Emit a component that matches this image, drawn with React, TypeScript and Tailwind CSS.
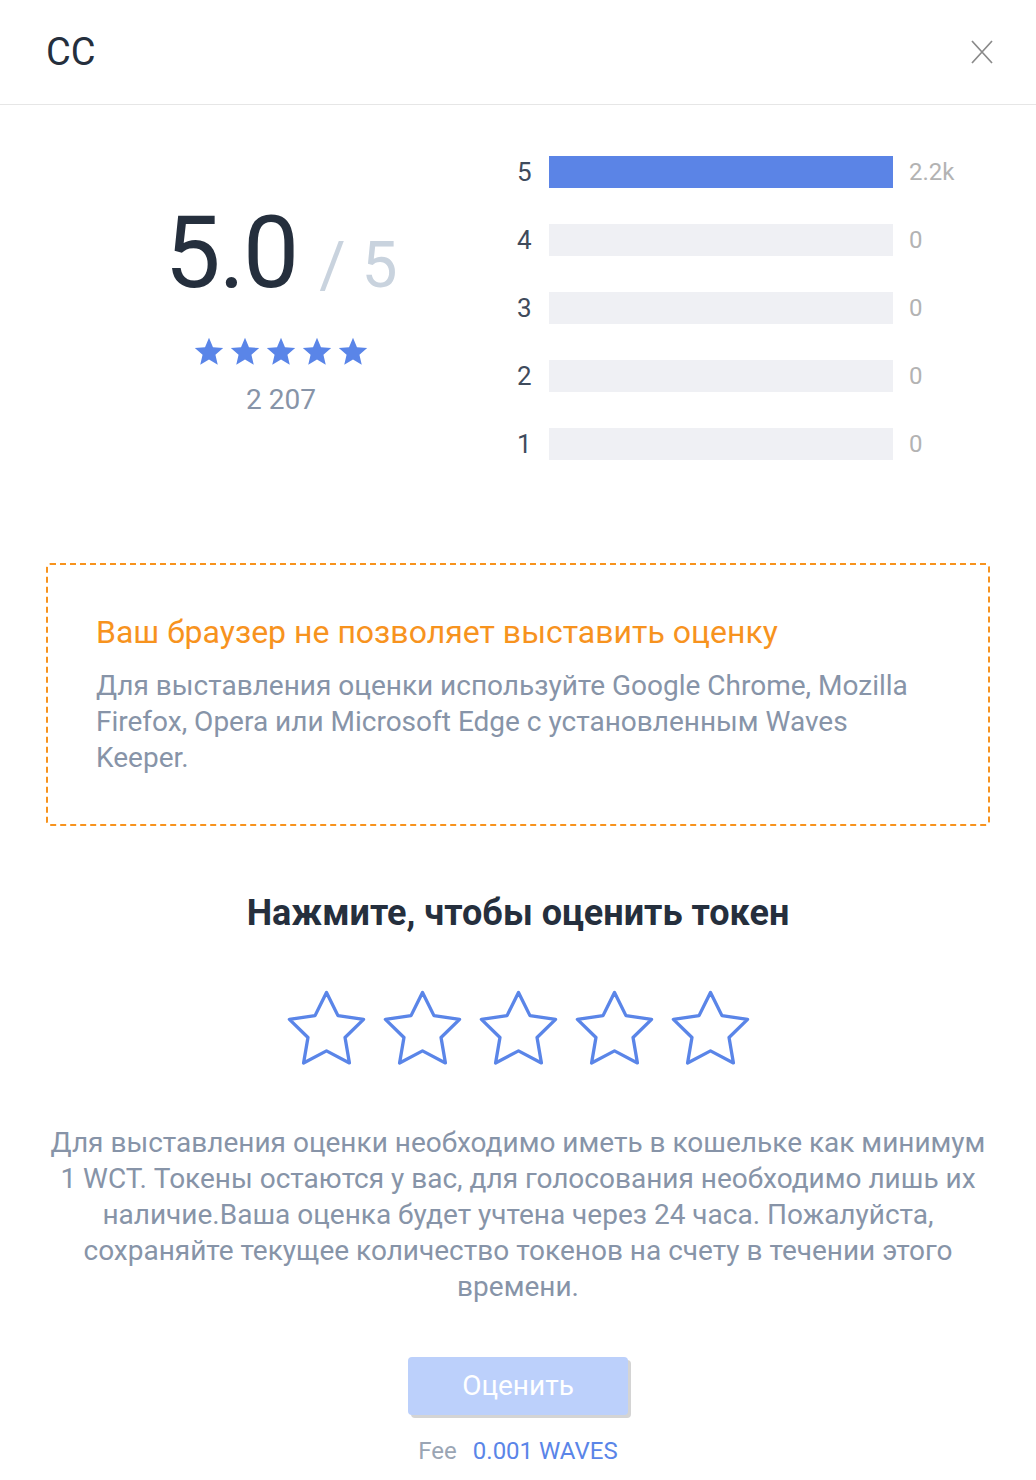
import React from 'react';

const bars = [
  { label: '5', value: '2.2k', pct: 100 },
  { label: '4', value: '0', pct: 0 },
  { label: '3', value: '0', pct: 0 },
  { label: '2', value: '0', pct: 0 },
  { label: '1', value: '0', pct: 0 },
];

const FilledStar = () => (
  <svg width="34" height="34" viewBox="0 0 24 24">
    <path
      d="M12 17.27L18.18 21l-1.64-7.03L22 9.24l-7.19-.61L12 2 9.19 8.63 2 9.24l5.46 4.73L5.82 21z"
      fill="#5a85e8"
    />
  </svg>
);

const OutlineStar = () => (
  <svg width="89" height="89" viewBox="0 0 24 24">
    <polygon
      points="12 2 15.09 8.26 22 9.27 17 14.14 18.18 21.02 12 17.77 5.82 21.02 7 14.14 2 9.27 8.91 8.26 12 2"
      fill="none"
      stroke="#5a85e8"
      strokeWidth="0.9"
      strokeLinejoin="round"
    />
  </svg>
);

export default function App() {
  return (
    <div className="w-[1036px] min-h-[1480px] bg-white text-[#252f3d]" style={{ fontFamily: 'Roboto, "Noto Sans", sans-serif' }}>
      {/* header */}
      <div className="h-[105px] flex items-center justify-between pl-[46px] pr-[42px] border-b border-[#e6e6e6]">
        <h1 className="text-[38px] leading-none">CC</h1>
        <button className="w-[24px] h-[26px] flex items-center justify-center">
          <svg width="22" height="24" viewBox="0 0 22 24">
            <path d="M1 1L21 23M21 1L1 23" stroke="#8a8a8a" strokeWidth="1.7" />
          </svg>
        </button>
      </div>

      {/* rating summary */}
      <div className="flex pl-[46px] pt-[51px]">
        <div className="w-[470px] flex flex-col items-center pt-[47px]">
          <div className="flex items-baseline leading-none">
            <span className="text-[100px] tracking-[-2px]">5.0</span>
            <span className="text-[64px] text-[#c9d3de] ml-[22px]">/ 5</span>
          </div>
          <div className="flex gap-[2px] mt-[32px]">
            {[0, 1, 2, 3, 4].map((i) => (
              <FilledStar key={i} />
            ))}
          </div>
          <div className="text-[28px] text-[#8794a8] mt-[17px] leading-none">2 207</div>
        </div>
        <div className="flex flex-col gap-[36px]">
          {bars.map((b) => (
            <div key={b.label} className="flex items-center h-[32px]">
              <span className="w-[33px] text-[26px] text-[#3f4b5c] leading-none pl-[1px]">{b.label}</span>
              <div className="w-[344px] h-[32px] bg-[#eff0f4]">
                <div className="h-full bg-[#5b84e6]" style={{ width: `${b.pct}%` }} />
              </div>
              <span className="ml-[16px] text-[24px] text-[#b3b3b3] leading-none">{b.value}</span>
            </div>
          ))}
        </div>
      </div>

      {/* warning */}
      <div className="mx-[46px] mt-[103px] border-2 border-dashed border-[#f7931e] rounded-[4px] px-[48px] pt-[49px] h-[263px]">
        <div className="text-[32px] text-[#f7931e] leading-[36px]">Ваш браузер не позволяет выставить оценку</div>
        <p className="mt-[18px] text-[28px] leading-[36px] text-[#8794a8]">
          Для выставления оценки используйте Google Chrome, Mozilla Firefox, Opera или Microsoft Edge с установленным Waves Keeper.
        </p>
      </div>

      {/* vote */}
      <h2 className="mt-[67px] text-center text-[36px] font-bold leading-[40px]">Нажмите, чтобы оценить токен</h2>
      <div className="flex justify-center gap-[7px] mt-[52px]">
        {[0, 1, 2, 3, 4].map((i) => (
          <OutlineStar key={i} />
        ))}
      </div>
      <p className="mt-[51px] px-[46px] text-center text-[28px] leading-[36px] text-[#8794a8]">
        Для выставления оценки необходимо иметь в кошельке как минимум 1 WCT. Токены остаются у вас, для голосования необходимо лишь их наличие.Ваша оценка будет учтена через 24 часа. Пожалуйста, сохраняйте текущее количество токенов на счету в течении этого времени.
      </p>
      <div className="flex justify-center mt-[52px]">
        <button className="w-[220px] h-[58px] rounded-[4px] bg-[#bcd0fb] text-white text-[28px] shadow-[3px_3px_0_#d4d4d4]">
          Оценить
        </button>
      </div>
      <div className="mt-[24px] flex justify-center items-baseline gap-[16px] text-[24px] leading-none">
        <span className="text-[#9aa5b4]">Fee</span>
        <span className="text-[#5a85e8]">0.001 WAVES</span>
      </div>
    </div>
  );
}
